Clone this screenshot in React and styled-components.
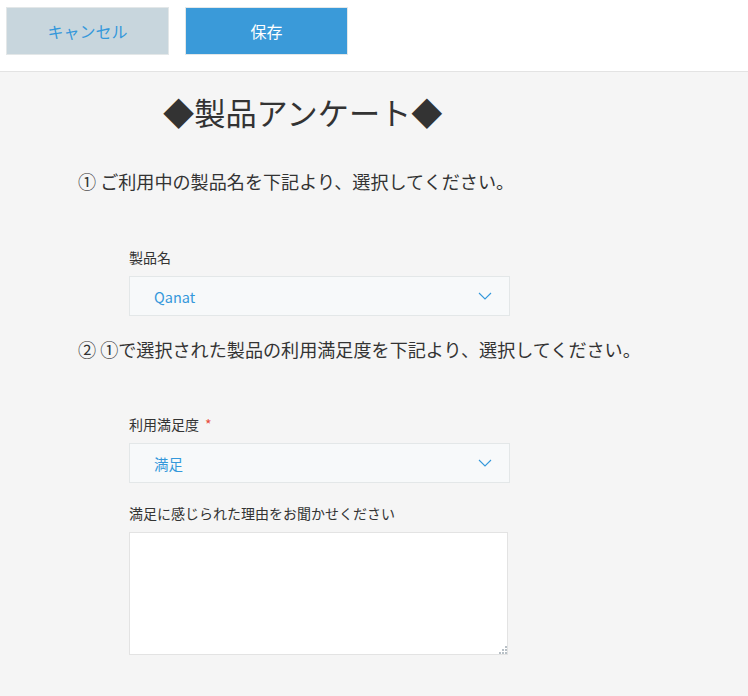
import React, { useState } from 'react'
import styled, { createGlobalStyle } from 'styled-components'

const GlobalStyle = createGlobalStyle`
  html, body {
    margin: 0;
    padding: 0;
    background: #f5f5f5;
    font-family: "Noto Sans CJK JP", "Noto Sans", sans-serif;
    color: #333;
  }
`

const Page = styled.div`
  width: 748px;
  min-height: 696px;
  background: #f5f5f5;
`

const Toolbar = styled.div`
  display: flex;
  align-items: flex-start;
  gap: 16px;
  height: 72px;
  box-sizing: border-box;
  padding: 7px 0 0 6px;
  background: #fff;
  border-bottom: 1px solid #e3e3e3;
`

const ActionButton = styled.button`
  width: 163px;
  height: 48px;
  box-sizing: border-box;
  border: 1px solid #e3e7e8;
  background: ${(props) => (props.primary ? '#3a9ad9' : '#c8d6dd')};
  color: ${(props) => (props.primary ? '#fff' : '#3498db')};
  font-family: inherit;
  font-size: 16px;
  cursor: pointer;
  padding: 0;
`

const Content = styled.div`
  display: flex;
  flex-direction: column;
  padding-top: 20px;
`

const Title = styled.h1`
  margin: 0 0 0 163px;
  font-size: 31.2px;
  font-weight: 400;
  line-height: 40px;
  color: #333;
`

const Question = styled.p`
  margin: ${(props) => props.top}px 0 0 78px;
  font-size: 18.1px;
  line-height: 24px;
  white-space: nowrap;
`

const Field = styled.div`
  display: flex;
  flex-direction: column;
  gap: 9px;
  margin: ${(props) => props.top}px 0 0 129px;
`

const Label = styled.label`
  font-size: 14px;
  line-height: 20px;
  color: #333;
`

const Required = styled.span`
  color: #e74c3c;
  margin-left: 6px;
`

const SelectBox = styled.div`
  display: flex;
  align-items: center;
  justify-content: space-between;
  width: 381px;
  height: 40px;
  box-sizing: border-box;
  padding: 0 17px 0 24px;
  background: #f7f9fa;
  border: 1px solid #e3e7e8;
  color: #3498db;
  font-size: 14.5px;
  cursor: pointer;
`

const TextAreaWrap = styled.div`
  position: relative;
  width: 379px;
  height: 123px;
`

const TextArea = styled.textarea`
  width: 100%;
  height: 100%;
  box-sizing: border-box;
  border: 1px solid #e3e3e3;
  background: #fff;
  resize: none;
  outline: none;
  font-family: inherit;
  font-size: 14px;
  padding: 8px;
`

const Grip = styled.svg`
  position: absolute;
  right: 1px;
  bottom: 1px;
`

const Chevron = () => (
  <svg width="14" height="8" viewBox="0 0 14 8">
    <polyline points="1,1 7,7 13,1" fill="none" stroke="#3498db" strokeWidth="1.1" />
  </svg>
)

const Select = ({ value }) => (
  <SelectBox>
    <span>{value}</span>
    <Chevron />
  </SelectBox>
)

const App = () => {
  const [reason, setReason] = useState('')

  return (
    <Page>
      <GlobalStyle />
      <Toolbar>
        <ActionButton>キャンセル</ActionButton>
        <ActionButton primary>保存</ActionButton>
      </Toolbar>
      <Content>
        <Title>◆製品アンケート◆</Title>
        <Question top={37}>① ご利用中の製品名を下記より、選択してください。</Question>
        <Field top={54}>
          <Label>製品名</Label>
          <Select value="Qanat" />
        </Field>
        <Question top={21}>② ①で選択された製品の利用満足度を下記より、選択してください。</Question>
        <Field top={53}>
          <Label>
            利用満足度<Required>*</Required>
          </Label>
          <Select value="満足" />
        </Field>
        <Field top={20}>
          <Label>満足に感じられた理由をお聞かせください</Label>
          <TextAreaWrap>
            <TextArea value={reason} onChange={(e) => setReason(e.target.value)} />
            <Grip width="8" height="8" viewBox="0 0 8 8">
              <rect x="6" y="0" width="2" height="2" fill="#b8c0c6" />
              <rect x="3" y="3" width="2" height="2" fill="#b8c0c6" />
              <rect x="6" y="3" width="2" height="2" fill="#b8c0c6" />
              <rect x="0" y="6" width="2" height="2" fill="#b8c0c6" />
              <rect x="3" y="6" width="2" height="2" fill="#b8c0c6" />
              <rect x="6" y="6" width="2" height="2" fill="#b8c0c6" />
            </Grip>
          </TextAreaWrap>
        </Field>
      </Content>
    </Page>
  )
}

export default App
